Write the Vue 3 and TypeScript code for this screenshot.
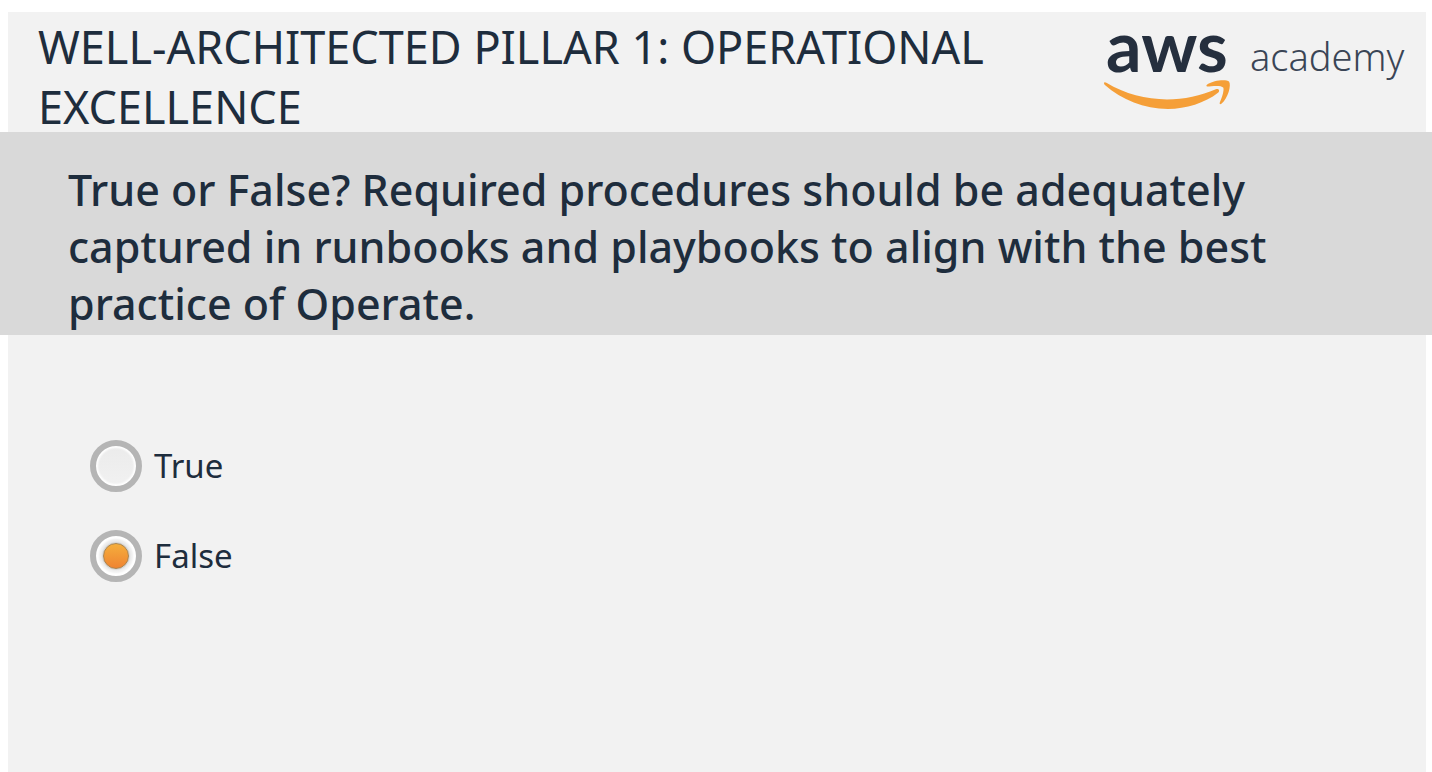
<script setup lang="ts">
import { ref } from 'vue'

interface Choice {
  id: string
  label: string
}

const title = 'WELL-ARCHITECTED PILLAR 1: OPERATIONAL EXCELLENCE'
const question =
  'True or False? Required procedures should be adequately captured in runbooks and playbooks to align with the best practice of Operate.'
const choices: Choice[] = [
  { id: 'choice-true', label: 'True' },
  { id: 'choice-false', label: 'False' },
]
const selected = ref('choice-false')
</script>

<template>
  <main class="slide">
    <header class="header">
      <h1 class="title">{{ title }}</h1>
      <svg class="logo" viewBox="0 0 304 84" role="img" aria-label="aws academy">
        <text class="logo-aws" x="2" y="44">aws</text>
        <text class="logo-academy" x="146" y="43">academy</text>
        <path
          class="smile"
          d="M0 55.5C0 54 1.2 54 2.4 54.8C21 66 42 71.4 63 71.4C80 71.4 97 67.6 111.8 61.2C114.6 60 116.4 62.8 114 64.8C101 75 82 81 64 81C40 81 18 72 0.6 56.8Z"
        />
        <path
          class="smile"
          d="M103 58.6C102 58.2 102.4 57.2 103.2 56.6C109.6 51.8 122.4 51.2 125 53.4C127.6 57 124 70.2 117.4 75.8C116.4 76.6 115.2 76 115.8 74.6C117.6 70.6 120.6 62 119.2 59.6C117.4 57 108 58 103 58.6Z"
        />
      </svg>
    </header>

    <form class="quiz" @submit.prevent>
      <h2 id="question" class="question">{{ question }}</h2>
      <div class="choices" role="radiogroup" aria-labelledby="question">
        <label v-for="choice in choices" :key="choice.id" class="choice" :for="choice.id">
          <input
            :id="choice.id"
            v-model="selected"
            class="radio"
            type="radio"
            name="answer"
            :value="choice.id"
          />
          <span>{{ choice.label }}</span>
        </label>
      </div>
    </form>
  </main>
</template>

<style>
body {
  margin: 0;
  background: #fff;
}
</style>

<style scoped>
.slide {
  box-sizing: border-box;
  min-height: calc(100vh - 12px);
  margin: 12px 6px 0 8px;
  background: #f2f2f2;
  color: #1e2d3d;
  font-family: "Noto Sans", "Open Sans", sans-serif;
}

.header {
  box-sizing: border-box;
  display: flex;
  justify-content: space-between;
  align-items: flex-start;
  height: 120px;
  padding: 5px 18px 0 30px;
}

.title {
  max-width: 1000px;
  margin: 0;
  font-size: 45px;
  font-weight: 400;
  line-height: 60px;
}

.logo {
  flex: none;
  width: 304px;
  height: 84px;
  margin-top: 11px;
  overflow: visible;
}

.logo-aws {
  fill: #252f3e;
  font-family: Lato, "Noto Sans", sans-serif;
  font-size: 70px;
  font-weight: 700;
}

.logo-academy {
  fill: #3a4555;
  font-size: 38px;
  font-weight: 300;
}

.smile {
  fill: #f59f38;
}

.question {
  margin: 0 -6px 0 -8px;
  padding: 29px 140px 3px 68px;
  background: #d9d9d9;
  font-size: 43px;
  font-weight: 500;
  line-height: 57px;
}

.choices {
  display: flex;
  flex-direction: column;
  align-items: flex-start;
  gap: 38px;
  padding: 105px 82px;
}

.choice {
  display: flex;
  align-items: center;
  gap: 12px;
  font-size: 33px;
  font-weight: 400;
  line-height: 52px;
}

.radio {
  box-sizing: border-box;
  flex: none;
  appearance: none;
  display: grid;
  place-items: center;
  width: 52px;
  height: 52px;
  margin: 0;
  border: 6px solid #b5b5b5;
  border-radius: 50%;
  background: linear-gradient(#ebebeb, #f1f1f1);
  box-shadow: inset 0 0 2px 2px #fff;
}

.radio:checked {
  box-shadow: inset 0 0 2px 3px #fff;
}

.radio:checked::before {
  content: "";
  box-sizing: border-box;
  width: 26px;
  height: 26px;
  border: 1px solid #a8834f;
  border-radius: 50%;
  background: linear-gradient(#f5ae3c, #ef8432);
  box-shadow: 0 0 2px #999;
}
</style>
